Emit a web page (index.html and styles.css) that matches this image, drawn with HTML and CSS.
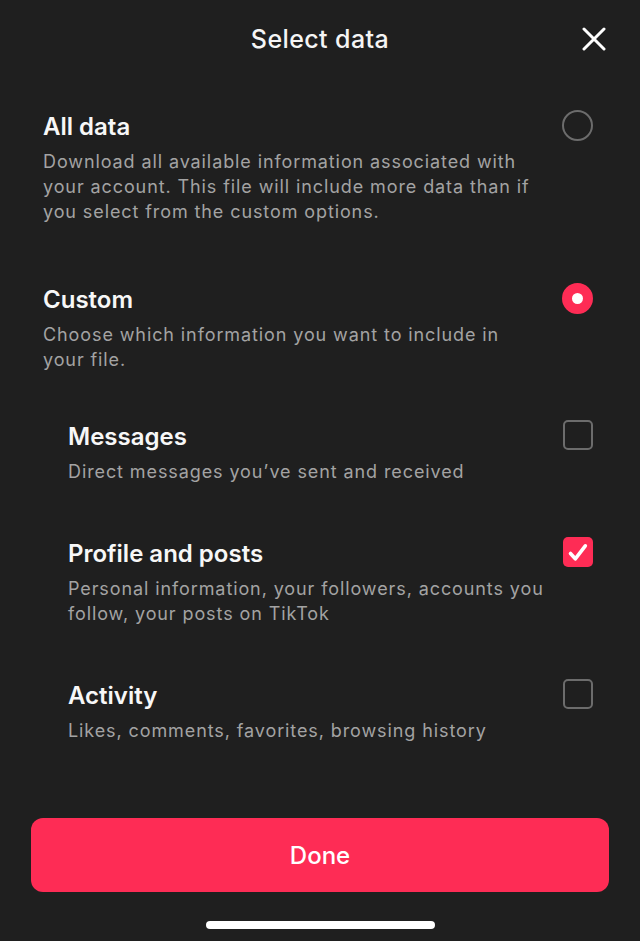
FILE: index.html
```html
<!DOCTYPE html>
<html lang="en">
<head>
<meta charset="utf-8">
<title>Select data</title>
<link rel="stylesheet" href="styles.css">
</head>
<body>
<div class="sheet">
  <header class="header">
    <h1 class="header-title">Select data</h1>
    <button class="close" aria-label="Close">
      <svg viewBox="0 0 24 24" width="24" height="24"><path d="M2 2L22 22M22 2L2 22" stroke="#fff" stroke-width="3" stroke-linecap="round" fill="none"/></svg>
    </button>
  </header>

  <main class="options">
    <div class="option option-all">
      <div class="option-text">
        <div class="option-title">All data</div>
        <div class="option-desc">Download all available information associated with your account. This file will include more data than if you select from the custom options.</div>
      </div>
      <span class="radio"></span>
    </div>

    <div class="option option-custom">
      <div class="option-text">
        <div class="option-title">Custom</div>
        <div class="option-desc">Choose which information you want to include in your file.</div>
      </div>
      <span class="radio radio-on"></span>
    </div>

    <div class="option sub sub-messages">
      <div class="option-text">
        <div class="option-title">Messages</div>
        <div class="option-desc">Direct messages you’ve sent and received</div>
      </div>
      <span class="check"></span>
    </div>

    <div class="option sub sub-profile">
      <div class="option-text">
        <div class="option-title">Profile and posts</div>
        <div class="option-desc">Personal information, your followers, accounts you follow, your posts on TikTok</div>
      </div>
      <span class="check check-on">
        <svg viewBox="0 0 30 30" width="30" height="30"><path d="M7.5 16.5L12.3 21.8L22.3 8.8" stroke="#fff" stroke-width="3.6" stroke-linecap="round" stroke-linejoin="round" fill="none"/></svg>
      </span>
    </div>

    <div class="option sub sub-activity">
      <div class="option-text">
        <div class="option-title">Activity</div>
        <div class="option-desc">Likes, comments, favorites, browsing history</div>
      </div>
      <span class="check"></span>
    </div>
  </main>

  <footer class="footer">
    <button class="done">Done</button>
    <div class="home-indicator"></div>
  </footer>
</div>
</body>
</html>
```

FILE: styles.css
```css
* { box-sizing: border-box; }
html, body {
  margin: 0;
  padding: 0;
  background: #1f1f1f;
}
body {
  font-family: Inter, "Noto Sans", "Liberation Sans", sans-serif;
  color: #fff;
}
.sheet {
  width: 640px;
  height: 941px;
  display: flex;
  flex-direction: column;
  background: #1f1f1f;
}
.header {
  position: relative;
  height: 78px;
  display: flex;
  align-items: center;
  justify-content: center;
}
.header-title {
  margin: 0;
  font-size: 25px;
  font-weight: 500;
  line-height: 30px;
  color: #f5f5f5;
  letter-spacing: 0.4px;
}
.close {
  position: absolute;
  right: 34px;
  top: 27px;
  width: 24px;
  height: 24px;
  padding: 0;
  border: 0;
  background: none;
  display: flex;
}
.options {
  display: flex;
  flex-direction: column;
  padding: 0 47px 0 43px;
}
.option {
  display: flex;
  justify-content: space-between;
  align-items: flex-start;
}
.option-all { margin-top: 34px; }
.option-custom { margin-top: 61px; }
.sub { padding-left: 25px; }
.sub-messages { margin-top: 50px; }
.sub-profile { margin-top: 55px; }
.sub-activity { margin-top: 55px; }
.option-text {
  display: flex;
  flex-direction: column;
  gap: 7px;
  max-width: 490px;
}
.option-title {
  font-size: 24px;
  font-weight: 600;
  line-height: 30px;
  color: #f7f7f7;
  letter-spacing: 0;
}
.option-desc {
  font-size: 18px;
  line-height: 25px;
  color: #a3a3a3;
  font-weight: 400;
  letter-spacing: 0.9px;
}
.sub .option-text { max-width: 480px; }
.radio {
  flex: none;
  width: 31px;
  height: 31px;
  border-radius: 50%;
  border: 2px solid #6c6c6c;
  margin-top: -2px;
  display: flex;
  align-items: center;
  justify-content: center;
}
.radio-on {
  background: #fe2c55;
  border-color: #fe2c55;
}
.radio-on::after {
  content: "";
  width: 11px;
  height: 11px;
  border-radius: 50%;
  background: #fff;
}
.check {
  flex: none;
  width: 30px;
  height: 30px;
  border-radius: 5px;
  border: 2px solid #6c6c6c;
  margin-top: -2px;
  display: flex;
}
.check-on {
  background: #fe2c55;
  border: 0;
}
.footer {
  margin-top: auto;
  display: flex;
  flex-direction: column;
  align-items: center;
  padding-bottom: 12px;
}
.done {
  width: 578px;
  height: 74px;
  border: 0;
  border-radius: 12px;
  background: #fe2c55;
  color: #fff;
  font-family: Inter, "Noto Sans", "Liberation Sans", sans-serif;
  font-size: 24px;
  font-weight: 500;
}
.home-indicator {
  margin-top: 29px;
  width: 229px;
  height: 8px;
  border-radius: 4px;
  background: #fff;
}
```
